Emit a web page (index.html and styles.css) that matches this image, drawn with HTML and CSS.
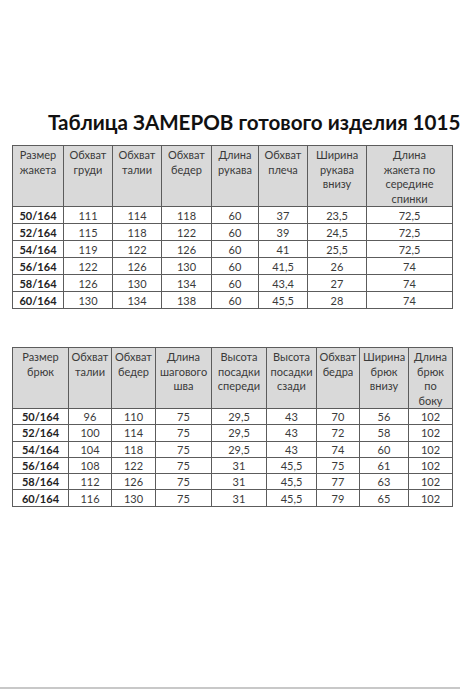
FILE: index.html
```html
<!DOCTYPE html>
<html lang="ru">
<head>
<meta charset="utf-8">
<title>Таблица ЗАМЕРОВ</title>
<link rel="stylesheet" href="styles.css">
</head>
<body>
<div class="page">
  <h1 class="title">Таблица ЗАМЕРОВ готового изделия 1015</h1>

  <table class="sizes sizes-jacket">
    <colgroup>
      <col class="w51"><col class="w49"><col class="w49"><col class="w50"><col class="w47"><col class="w49"><col class="w59"><col class="w86">
    </colgroup>
    <thead>
      <tr>
        <th>Размер<br>жакета</th>
        <th>Обхват<br>груди</th>
        <th>Обхват<br>талии</th>
        <th>Обхват<br>бедер</th>
        <th>Длина<br>рукава</th>
        <th>Обхват<br>плеча</th>
        <th>Ширина<br>рукава<br>внизу</th>
        <th>Длина<br>жакета по<br>середине<br>спинки</th>
      </tr>
    </thead>
    <tbody>
      <tr><td class="sz">50/164</td><td>111</td><td>114</td><td>118</td><td>60</td><td>37</td><td>23,5</td><td>72,5</td></tr>
      <tr><td class="sz">52/164</td><td>115</td><td>118</td><td>122</td><td>60</td><td>39</td><td>24,5</td><td>72,5</td></tr>
      <tr><td class="sz">54/164</td><td>119</td><td>122</td><td>126</td><td>60</td><td>41</td><td>25,5</td><td>72,5</td></tr>
      <tr><td class="sz">56/164</td><td>122</td><td>126</td><td>130</td><td>60</td><td>41,5</td><td>26</td><td>74</td></tr>
      <tr><td class="sz">58/164</td><td>126</td><td>130</td><td>134</td><td>60</td><td>43,4</td><td>27</td><td>74</td></tr>
      <tr><td class="sz">60/164</td><td>130</td><td>134</td><td>138</td><td>60</td><td>45,5</td><td>28</td><td>74</td></tr>
    </tbody>
  </table>

  <table class="sizes sizes-pants">
    <colgroup>
      <col class="w56"><col class="w43"><col class="w44"><col class="w56"><col class="w55"><col class="w50"><col class="w43"><col class="w49"><col class="w44">
    </colgroup>
    <thead>
      <tr>
        <th>Размер<br>брюк</th>
        <th>Обхват<br>талии</th>
        <th>Обхват<br>бедер</th>
        <th>Длина<br>шагового<br>шва</th>
        <th>Высота<br>посадки<br>спереди</th>
        <th>Высота<br>посадки<br>сзади</th>
        <th>Обхват<br>бедра</th>
        <th>Ширина<br>брюк<br>внизу</th>
        <th>Длина<br>брюк<br>по<br>боку</th>
      </tr>
    </thead>
    <tbody>
      <tr><td class="sz">50/164</td><td>96</td><td>110</td><td>75</td><td>29,5</td><td>43</td><td>70</td><td>56</td><td>102</td></tr>
      <tr><td class="sz">52/164</td><td>100</td><td>114</td><td>75</td><td>29,5</td><td>43</td><td>72</td><td>58</td><td>102</td></tr>
      <tr><td class="sz">54/164</td><td>104</td><td>118</td><td>75</td><td>29,5</td><td>43</td><td>74</td><td>60</td><td>102</td></tr>
      <tr><td class="sz">56/164</td><td>108</td><td>122</td><td>75</td><td>31</td><td>45,5</td><td>75</td><td>61</td><td>102</td></tr>
      <tr><td class="sz">58/164</td><td>112</td><td>126</td><td>75</td><td>31</td><td>45,5</td><td>77</td><td>63</td><td>102</td></tr>
      <tr><td class="sz">60/164</td><td>116</td><td>130</td><td>75</td><td>31</td><td>45,5</td><td>79</td><td>65</td><td>102</td></tr>
    </tbody>
  </table>
</div>
<div class="page-edge"></div>
</body>
</html>
```

FILE: styles.css
```css
html, body {
  margin: 0;
  padding: 0;
  background: #ffffff;
}

body {
  font-family: Lato, "Open Sans", "DejaVu Sans", sans-serif;
  color: #333333;
  width: 460px;
  height: 690px;
  overflow: hidden;
  display: flex;
  flex-direction: column;
}

.page {
  flex: 1;
  padding: 0 8px 0 12px;
}

.title {
  margin: 108px 0 0 36px;
  font-size: 20.6px;
  line-height: 28px;
  font-weight: 700;
  color: #111111;
  white-space: nowrap;
}

.sizes {
  width: 440px;
  table-layout: fixed;
  border-collapse: collapse;
  font-size: 11px;
}

.sizes-jacket {
  margin-top: 9px;
}

.sizes-pants {
  margin-top: 38px;
}

.sizes th,
.sizes td {
  border: 1px solid #5c5c5c;
  text-align: center;
  padding: 0;
  white-space: nowrap;
}

.sizes th {
  background: #d9d9d9;
  font-weight: 400;
  vertical-align: top;
  line-height: 14.5px;
  color: #3a3a3a;
  padding-top: 2px;
}

.sizes-jacket th { height: 58px; }
.sizes-pants th { height: 56px; }

.sizes td {
  line-height: 15px;
  color: #3a3a3a;
}

.sizes-jacket td { height: 16px; }
.sizes-pants td { height: 15.3px; }

.sizes td.sz {
  font-weight: 700;
  color: #222222;
}

.w43 { width: 43px; }
.w44 { width: 44px; }
.w47 { width: 47px; }
.w49 { width: 49px; }
.w50 { width: 50px; }
.w51 { width: 51px; }
.w55 { width: 55px; }
.w56 { width: 56px; }
.w59 { width: 59px; }
.w86 { width: 86px; }

.page-edge {
  height: 2px;
  background: #c8c8c8;
  margin-bottom: 1px;
}
```
